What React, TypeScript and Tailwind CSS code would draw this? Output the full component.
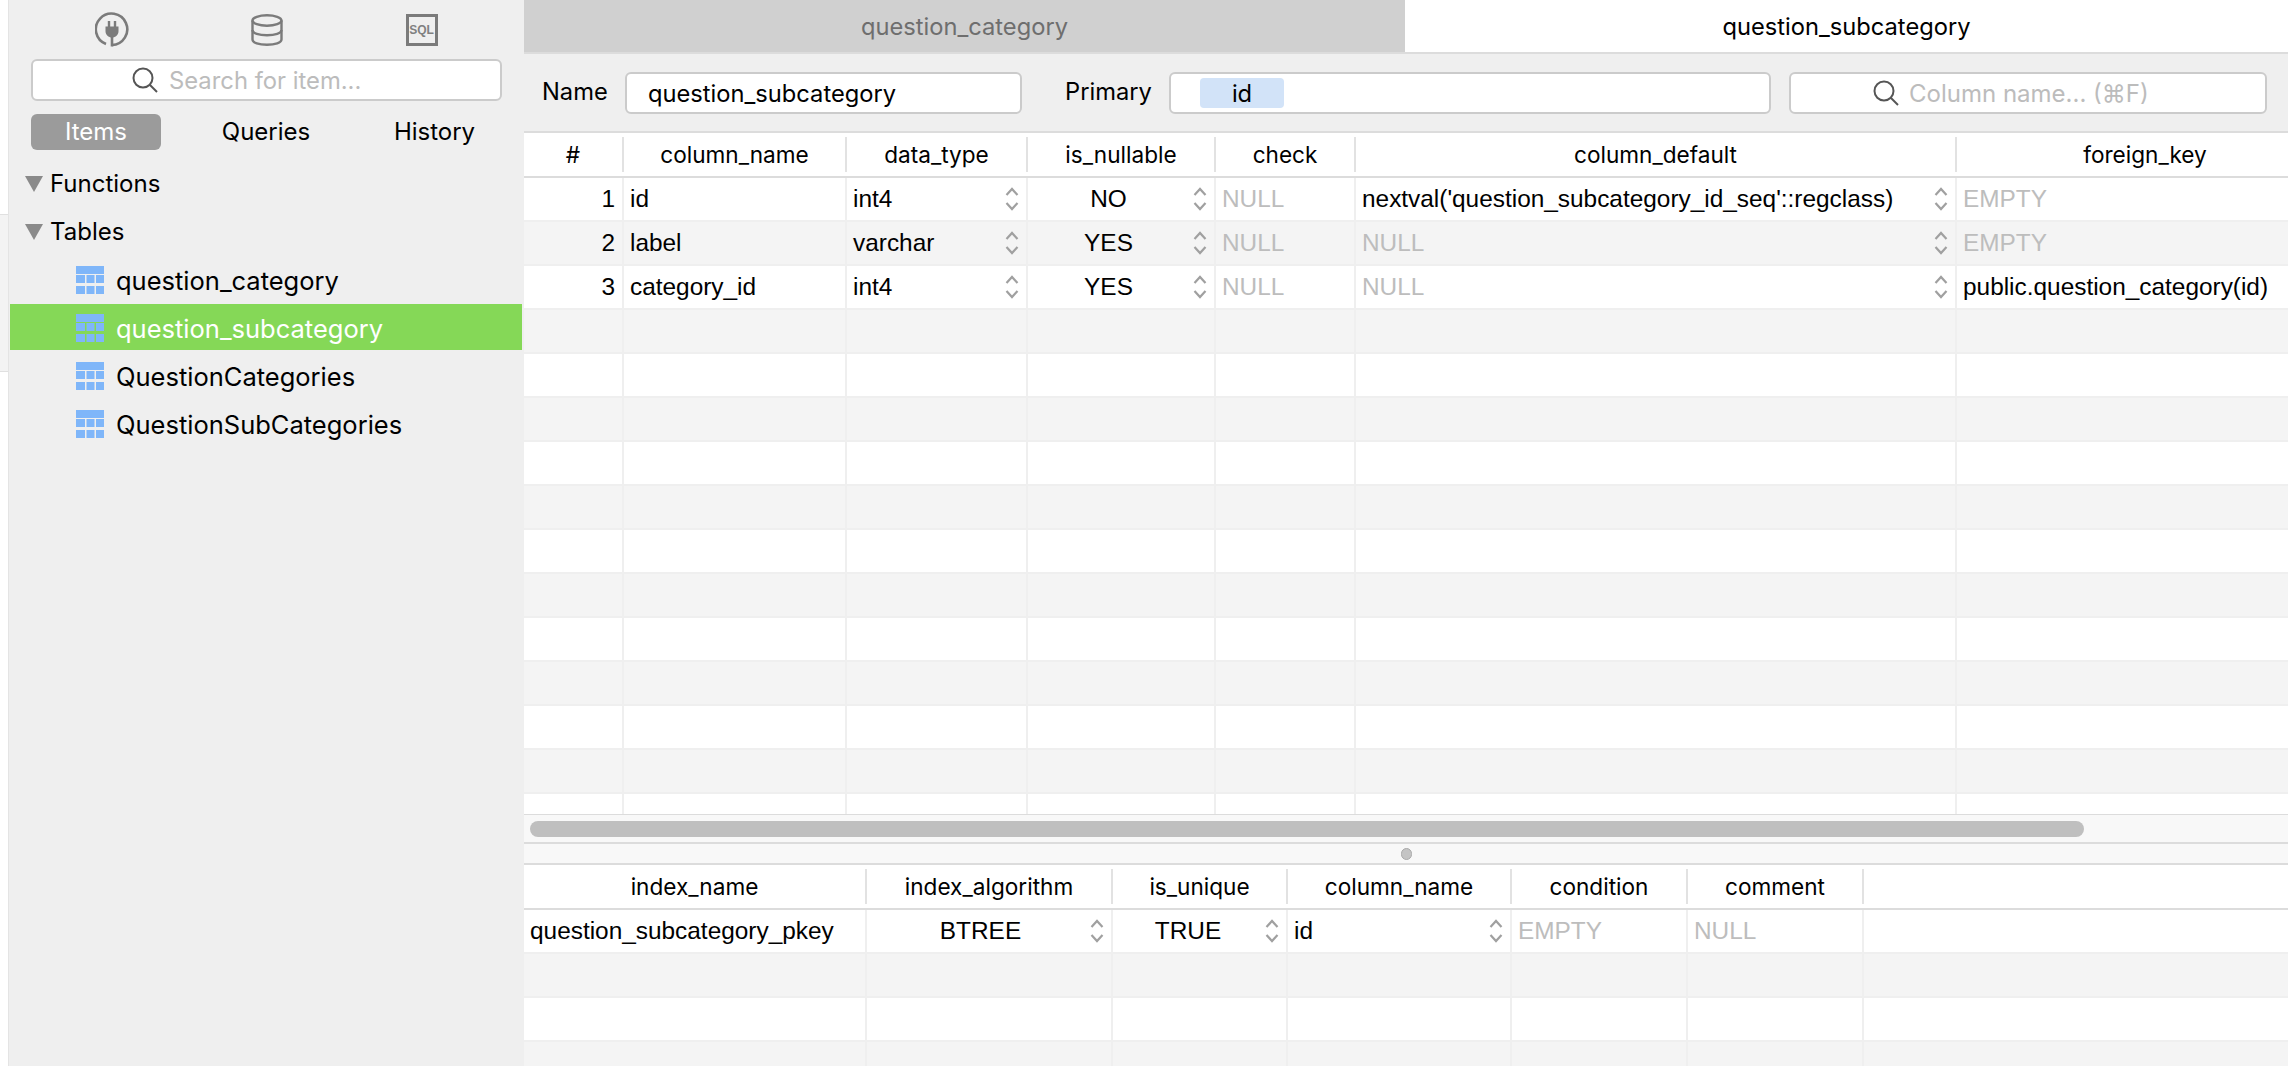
import { Fragment } from "react";

const upperCols = "grid grid-cols-[100px_223px_181px_188px_140px_601px_376px]";
const lowerCols = "grid grid-cols-[343px_246px_175px_224px_176px_176px_1fr]";

type Cell = {
  text?: string;
  muted?: boolean;
  stepper?: boolean;
  align?: string;
};

const columnRows: Cell[][] = [
  [
    { text: "1", align: "text-right" },
    { text: "id" },
    { text: "int4", stepper: true },
    { text: "NO", stepper: true, align: "text-center pr-[10px]" },
    { text: "NULL", muted: true },
    { text: "nextval('question_subcategory_id_seq'::regclass)", stepper: true },
    { text: "EMPTY", muted: true },
  ],
  [
    { text: "2", align: "text-right" },
    { text: "label" },
    { text: "varchar", stepper: true },
    { text: "YES", stepper: true, align: "text-center pr-[10px]" },
    { text: "NULL", muted: true },
    { text: "NULL", muted: true, stepper: true },
    { text: "EMPTY", muted: true },
  ],
  [
    { text: "3", align: "text-right" },
    { text: "category_id" },
    { text: "int4", stepper: true },
    { text: "YES", stepper: true, align: "text-center pr-[10px]" },
    { text: "NULL", muted: true },
    { text: "NULL", muted: true, stepper: true },
    { text: "public.question_category(id)" },
  ],
];

const indexRows: Cell[][] = [
  [
    { text: "question_subcategory_pkey" },
    { text: "BTREE", stepper: true, align: "text-center pr-[2px]" },
    { text: "TRUE", stepper: true, align: "text-center pr-[8px]" },
    { text: "id", stepper: true },
    { text: "EMPTY", muted: true },
    { text: "NULL", muted: true },
    {},
  ],
];

function Stepper() {
  return (
    <svg width="14" height="24" viewBox="0 0 14 24" fill="none" stroke="#a0a0a0" strokeWidth="2.2" className="shrink-0">
      <path d="M1.5 8 L7 2 L12.5 8" />
      <path d="M1.5 16 L7 22 L12.5 16" />
    </svg>
  );
}

function SearchIcon() {
  return (
    <svg width="26" height="26" viewBox="0 0 26 26" fill="none" stroke="#555" strokeWidth="2" className="shrink-0">
      <circle cx="11" cy="11" r="9.5" />
      <path d="M18 18 L25 25" />
    </svg>
  );
}

function TableIcon() {
  return (
    <svg width="28" height="28" viewBox="0 0 28 28" fill="#7fb6f9" className="shrink-0">
      <rect x="0" y="0" width="28" height="8" />
      <rect x="0" y="9" width="9" height="8" />
      <rect x="10.5" y="9" width="8" height="8" />
      <rect x="20" y="9" width="8" height="8" />
      <rect x="0" y="20" width="9" height="8" />
      <rect x="10.5" y="20" width="8" height="8" />
      <rect x="20" y="20" width="8" height="8" />
    </svg>
  );
}

function Triangle() {
  return (
    <svg width="18" height="16" viewBox="0 0 18 16" fill="#8a8a8a" className="shrink-0">
      <path d="M0 0 H18 L9 16 Z" />
    </svg>
  );
}

function TreeItem({ label, selected }: { label: string; selected?: boolean }) {
  return (
    <div
      className={
        selected
          ? "ml-px mr-[2px] flex h-[48px] items-center gap-[12px] border-b-2 border-transparent bg-[#85d857] bg-clip-padding pl-[66px] pt-[2px] text-white"
          : "ml-px mr-[2px] flex h-[48px] items-center gap-[12px] pl-[66px] text-black"
      }
    >
      <TableIcon />
      <span className="pt-[2px] text-[25.5px] leading-none">{label}</span>
    </div>
  );
}

function TableCell({ cell }: { cell: Cell }) {
  return (
    <div className="flex min-w-0 items-center border-r-2 border-[#efefef] pl-[6px] pr-[7px] last:border-r-0">
      <span
        className={`min-w-0 flex-1 whitespace-nowrap ${cell.muted ? "text-[#bdbdbd]" : "text-black"} ${cell.align ?? ""}`}
      >
        {cell.text}
      </span>
      {cell.stepper && <Stepper />}
    </div>
  );
}

function GridTable({
  cols,
  headers,
  rows,
  rowCount,
}: {
  cols: string;
  headers: string[];
  rows: Cell[][];
  rowCount: number;
}) {
  return (
    <Fragment>
      <div className={`${cols} h-[45px] shrink-0 border-b-2 border-[#dcdcdc] bg-white py-[4px] font-['Inter',sans-serif] text-[22.6px] text-black`}>
        {headers.map((h, i) => (
          <div key={i} className="flex items-center justify-center border-r-2 border-[#e2e2e2] last:border-r-0">
            {h}
          </div>
        ))}
      </div>
      <div className="min-h-0 flex-1 overflow-hidden font-['Liberation_Sans',sans-serif] text-[24.4px]">
        {Array.from({ length: rowCount }).map((_, r) => (
          <div
            key={r}
            className={`${cols} h-[44px] border-b-2 border-[#efefef] ${r % 2 === 0 ? "bg-white" : "bg-[#f4f4f4]"}`}
          >
            {(rows[r] ?? headers.map(() => ({} as Cell))).map((cell, c) => (
              <TableCell key={c} cell={cell} />
            ))}
          </div>
        ))}
      </div>
    </Fragment>
  );
}

export default function App() {
  return (
    <div className="flex h-[1066px] w-[2292px] overflow-hidden bg-white font-['Inter',sans-serif]">
      {/* window behind the sidebar */}
      <div className="flex w-[9px] shrink-0 flex-col border-r border-[#e4e4e4]">
        <div className="h-[215px] border-b border-[#e0e0e0] bg-white" />
        <div className="h-[157px] border-b border-[#e0e0e0] bg-[#f3f3f3]" />
        <div className="flex-1 bg-white" />
      </div>

      <aside className="flex w-[515px] shrink-0 flex-col bg-[#efefef]">
        <div className="flex h-[59px] items-start justify-center pt-[12px]">
          <div className="flex w-[155px] justify-center">
            <svg width="34" height="35" viewBox="0 0 34 35" fill="none" stroke="#7b7b7b" strokeWidth="2.6">
              <path d="M11 32 A15.7 15.7 0 1 1 17 33" />
              <path d="M17 23 V34.5" />
              <path d="M14 9 V15 M20 9 V15" strokeWidth="2.4" />
              <path d="M10.5 14.5 H23.5 V19 C23.5 23 20.5 25.5 17 25.5 C13.5 25.5 10.5 23 10.5 19 Z" fill="#7b7b7b" stroke="none" />
            </svg>
          </div>
          <div className="flex w-[155px] justify-center pt-[2px]">
            <svg width="32" height="32" viewBox="0 0 32 32" fill="none" stroke="#7b7b7b" strokeWidth="2.4">
              <ellipse cx="16" cy="6.5" rx="14.5" ry="5.2" />
              <path d="M1.5 6.5 V25.5 C1.5 28.8 8 30.7 16 30.7 C24 30.7 30.5 28.8 30.5 25.5 V6.5" />
              <path d="M1.5 16 C1.5 19.3 8 21.2 16 21.2 C24 21.2 30.5 19.3 30.5 16" />
            </svg>
          </div>
          <div className="flex w-[155px] justify-center pt-[2px]">
            <div className="flex h-[32px] w-[32px] items-center justify-center border-[3px] border-[#7b7b7b] font-['Liberation_Sans',sans-serif] text-[12px] font-bold leading-none text-[#808080]">
              SQL
            </div>
          </div>
        </div>

        <div className="mx-[22px] flex h-[42px] items-center gap-[11px] rounded-[6px] border-2 border-[#cbcbcb] bg-white pl-[99px]">
          <SearchIcon />
          <span className="pt-[2px] text-[23.8px] leading-none text-[#bcbcbc]">Search for item...</span>
        </div>

        <div className="mt-[13px] flex h-[36px] pl-[22px] text-[24px] text-black">
          <div className="flex w-[130px] items-center justify-center rounded-[6px] bg-[#9b9b9b] text-white">Items</div>
          <div className="flex w-[210px] items-center justify-center">Queries</div>
          <div className="flex w-[127px] items-center justify-center">History</div>
        </div>

        <div className="mt-[10px] flex h-[48px] items-center gap-[7px] pl-[16px] text-[24px] text-black">
          <Triangle />
          Functions
        </div>
        <div className="flex h-[48px] items-center gap-[7px] pl-[16px] text-[24px] text-black">
          <Triangle />
          Tables
        </div>
        <TreeItem label="question_category" />
        <TreeItem label="question_subcategory" selected />
        <TreeItem label="QuestionCategories" />
        <TreeItem label="QuestionSubCategories" />
      </aside>

      <main className="flex min-w-0 flex-1 flex-col overflow-hidden">
        <div className="mr-[4px] flex h-[54px] shrink-0 border-b-2 border-[#dcdcdc] text-[23.7px]">
          <div className="flex w-[881px] items-center justify-center bg-[#d0d0d0] pt-[2px] text-[#6e6e6e]">question_category</div>
          <div className="flex flex-1 items-center justify-center bg-white pt-[2px] text-black">question_subcategory</div>
        </div>

        <div className="mr-[4px] flex h-[79px] shrink-0 items-center border-b-2 border-[#dcdcdc] bg-[#efefef] text-[23.7px]">
          <span className="ml-[18px] w-[83px] pb-[2px] text-black">Name</span>
          <div className="flex h-[42px] w-[397px] items-center rounded-[6px] border-2 border-[#cbcbcb] bg-white pl-[21px] pt-[2px] text-black">
            question_subcategory
          </div>
          <span className="ml-[43px] w-[104px] pb-[2px] text-black">Primary</span>
          <div className="flex h-[42px] w-[602px] items-center rounded-[6px] border-2 border-[#cbcbcb] bg-white pl-[29px]">
            <span className="flex h-[30px] w-[84px] items-center justify-center rounded-[4px] bg-[#d2e3f8] pt-[2px] text-black">id</span>
          </div>
          <div className="ml-[18px] flex h-[42px] w-[478px] items-center gap-[10px] rounded-[6px] border-2 border-[#cbcbcb] bg-white pl-[82px]">
            <SearchIcon />
            <span className="pt-[3px] text-[24px] leading-none text-[#bcbcbc]">Column name... (⌘F)</span>
          </div>
        </div>

        <div className="mr-[4px] flex h-[681px] shrink-0 flex-col overflow-hidden">
          <GridTable
            cols={upperCols}
            headers={["#", "column_name", "data_type", "is_nullable", "check", "column_default", "foreign_key"]}
            rows={columnRows}
            rowCount={15}
          />
        </div>

        <div className="mr-[4px] flex h-[30px] shrink-0 items-center border-b-2 border-t border-[#dcdcdc] bg-[#f8f8f8] pl-[6px]">
          <div className="h-[16px] w-[1554px] rounded-full bg-[#bfbfbf]" />
        </div>
        <div className="mr-[4px] flex h-[21px] shrink-0 items-center justify-center border-b-2 border-[#dcdcdc] bg-[#f8f8f8]">
          <div className="h-[12px] w-[11px] rounded-full border border-[#aaa] bg-[#c4c4c4]" />
        </div>

        <div className="mr-[4px] flex min-h-0 flex-1 flex-col">
          <GridTable
            cols={lowerCols}
            headers={["index_name", "index_algorithm", "is_unique", "column_name", "condition", "comment", ""]}
            rows={indexRows}
            rowCount={4}
          />
        </div>
      </main>
    </div>
  );
}
